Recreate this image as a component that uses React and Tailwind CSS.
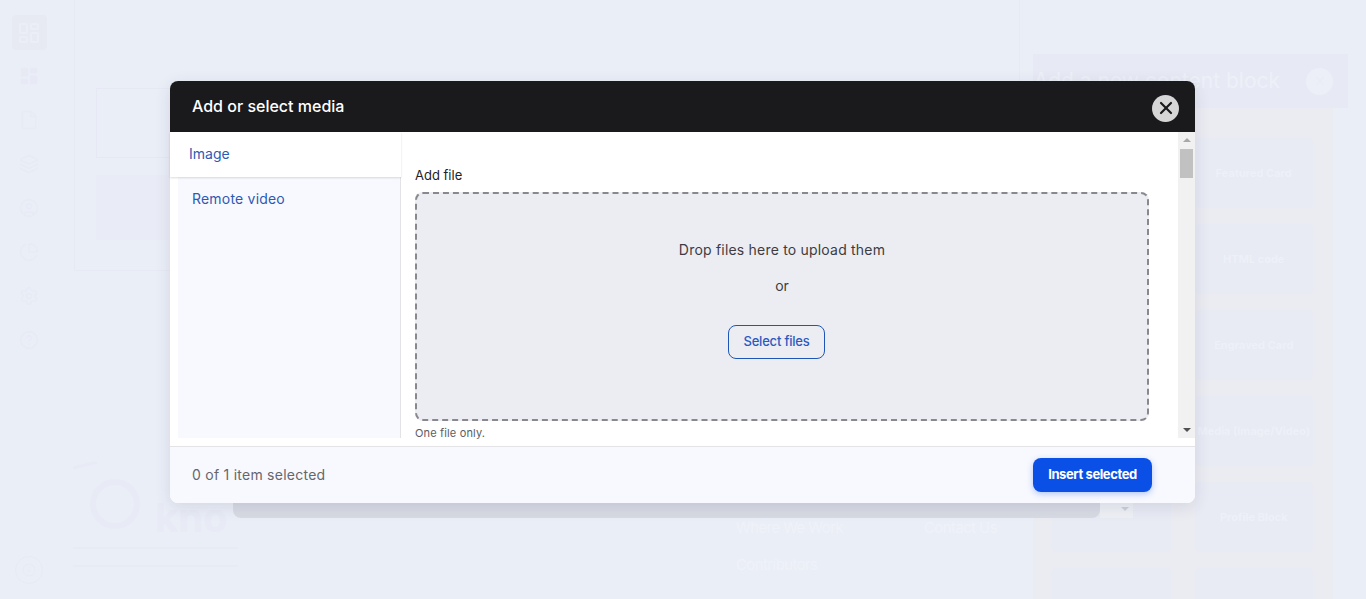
import { LayoutDashboard, File, Layers, CircleUser, PieChart, Settings, CircleHelp, X, Info } from 'lucide-react';

const sideIcons = [File, Layers, CircleUser, PieChart, Settings, CircleHelp];
const blockLabels = ['', 'Featured Card', '', 'HTML code', '', 'Engraved Card', '', 'Media (Image/Video)', '', 'Profile Block', '', ''];

function PageBehind() {
	return (
		<div className="flex h-full w-full">
			<aside className="flex w-[58px] shrink-0 flex-col items-center pt-[15px]">
				<div className="flex size-[35px] items-center justify-center rounded bg-[#e7eaf3]">
					<LayoutDashboard className="size-[24px] text-[#ebeef7]" strokeWidth={2} />
				</div>
				<div className="mt-[16px] flex flex-col items-center gap-[24px]">
					<LayoutDashboard className="size-[20px] text-[#e7eaf4]" fill="#e7eaf4" />
					{sideIcons.map((Icon, i) => (
						<Icon key={i} className="size-[20px] text-[#e8ebf5]" />
					))}
				</div>
				<div className="mt-auto mb-[15px] flex size-[28px] items-center justify-center rounded-full border border-[#e8ebf5]">
					<Info className="size-[14px] text-[#e8ebf5]" />
				</div>
			</aside>

			<main className="flex w-[962px] shrink-0 flex-col">
				<section className="ml-[16px] h-[271px] border-r border-b border-l border-[#e7eaf4] pt-[88px] pl-[21px]">
					<div className="h-[70px] border border-[#e6e9f3]" />
					<div className="mt-[17px] h-[65px] bg-[#e9ecf6]" />
				</section>
				<div className="flex flex-1 items-start">
					<div className="mt-[191px] ml-[15px] flex w-[165px] flex-col">
						<div className="flex items-end">
							<svg width="82" height="70" viewBox="0 0 82 70" fill="none" className="text-[#e8ebf5]">
								<path d="M0 6 L24 0" stroke="currentColor" strokeWidth="3" />
								<circle cx="42" cy="42" r="22" stroke="currentColor" strokeWidth="6" />
							</svg>
							<span className="text-[40px] leading-[28px] font-bold text-[#e8ebf5]">kno</span>
						</div>
						<div className="mt-[15px] h-[2px] w-[165px] bg-[#e8ebf5]" />
						<div className="mt-[16px] h-[2px] w-[165px] bg-[#e8ebf5]" />
					</div>
					<div className="mt-[248px] ml-[498px] flex w-[188px] flex-col gap-[19px] text-[15px] leading-[18px] tracking-[-0.6px] text-[#f0f2f9]">
						<span>Where We Work</span>
						<span>Contributors</span>
					</div>
					<span className="mt-[248px] text-[15px] leading-[18px] tracking-[-0.6px] text-[#f0f2f9]">Contact Us</span>
				</div>
			</main>

			<aside className="flex w-[346px] shrink-0 flex-col pt-[54px] pl-[13px]">
				<div className="flex h-[54px] w-[315px] shrink-0 items-center justify-end bg-[#e7eaf4] pr-[15px]">
					<span className="text-[21px] whitespace-nowrap text-[#edf0f8]">Add a new content block</span>
					<span className="ml-[26px] flex size-[27px] shrink-0 items-center justify-center rounded-full bg-[#eceff7]">
						<X className="size-[14px] text-[#e9ecf5]" />
					</span>
				</div>
				<div className="grid w-[300px] flex-1 grid-cols-2 content-start gap-x-[24px] gap-y-[16px] overflow-hidden bg-[#ebecf2] pt-[30px] pr-[20px] pl-[19px]">
					{blockLabels.map((label, i) => (
						<div key={i} className="flex h-[70px] items-center justify-center rounded bg-[#e8ebf4] text-[11px] font-bold whitespace-nowrap text-[#edf0f8]">
							{label}
						</div>
					))}
				</div>
			</aside>
		</div>
	);
}

function MediaModal() {
	return (
		<div className="absolute top-[81px] left-[170px] flex h-[422px] w-[1025px] flex-col rounded-lg bg-white shadow-[0_4px_16px_rgba(40,50,80,0.12)]">
			<header className="flex h-[51px] shrink-0 items-center justify-between rounded-t-lg bg-[#1a1a1c] pr-[16px] pb-[2px] pl-[22px]">
				<h2 className="text-[16px] font-medium text-white">Add or select media</h2>
				<button className="mt-[5px] flex size-[27px] items-center justify-center rounded-full bg-[#d6d6d6] text-[#1a1a1c]">
					<X className="size-[20px]" strokeWidth={2.6} />
				</button>
			</header>

			<div className="flex h-[306px] shrink-0">
				<nav className="flex w-[231px] shrink-0 flex-col">
					<div className="z-10 flex h-[45px] shrink-0 items-center bg-white pb-[2px] pl-[19px] text-[14px] text-[#2d5ab5] shadow-[0_1px_2px_rgba(0,0,0,0.14)]">
						Image
					</div>
					<div className="flex-1 border-r border-[#e3e3e6] pl-[8px]">
						<div className="h-full bg-[#f8f9fe] pt-[12px] pl-[14px] text-[14px] leading-[20px] tracking-[0.2px] text-[#2d5ab5]">
							Remote video
						</div>
					</div>
				</nav>

				<div className="flex-1 pt-[35px] pl-[14px]">
					<p className="text-[13px] leading-[16px] text-[#222226]">Add file</p>
					<div className="mt-[9px] flex h-[229px] w-[734px] flex-col items-center rounded-lg border-2 border-dashed border-[#88888e] bg-[#ecedf3]">
						<p className="mt-[46px] text-[14px] leading-[20px] tracking-[0.2px] text-[#3c3c42]">Drop files here to upload them</p>
						<p className="mt-[16px] text-[14px] leading-[20px] text-[#3c3c42]">or</p>
						<button className="mt-[29px] mr-[11px] h-[34px] w-[97px] rounded-lg border border-[#1f56b5] text-[13px] font-medium tracking-[-0.2px] text-[#2a5abf]">
							Select files
						</button>
					</div>
					<p className="mt-[5px] text-[11px] leading-[14px] tracking-[0.15px] text-[#5c5c62]">One file only.</p>
				</div>

				<div className="flex w-[17px] shrink-0 flex-col items-center bg-[#f1f1f1]">
					<span className="mt-[6px] h-0 w-0 border-x-[4px] border-b-[4px] border-x-transparent border-b-[#a8a8a8]" />
					<span className="mt-[7px] h-[29px] w-[13px] bg-[#c1c1c1]" />
					<span className="mt-auto mb-[6px] h-0 w-0 border-x-[4px] border-t-[4px] border-x-transparent border-t-[#505050]" />
				</div>
			</div>

			<footer className="mt-[8px] flex flex-1 items-center justify-between rounded-b-lg border-t border-[#e3e3e6] bg-[#f8f9fe] pr-[43px] pl-[22px]">
				<span className="pb-[2px] text-[14px] tracking-[0.25px] text-[#66666c]">0 of 1 item selected</span>
				<button className="h-[34px] w-[119px] rounded-lg bg-[#0a50e6] text-[13px] font-bold tracking-[-0.4px] text-white shadow-[0_2px_6px_rgba(10,80,230,0.3)]">
					Insert selected
				</button>
			</footer>
		</div>
	);
}

export default function App() {
	return (
		<div className="relative h-[599px] w-[1366px] overflow-hidden bg-[#eaeef7] [font-family:Inter,sans-serif]">
			<PageBehind />
			{/* strip of the sticky bar that peeks out under the modal */}
			<div className="absolute top-[440px] left-[233px] flex h-[78px] w-[900px]">
				<div className="flex-1 rounded-b-lg bg-[#d8dbe4]" />
				<div className="flex w-[33px] items-end justify-center bg-[#eef0f5] pb-[7px] pl-[17px]">
					<span className="h-0 w-0 border-x-[4px] border-t-[4px] border-x-transparent border-t-[#cdd0da]" />
				</div>
			</div>
			<MediaModal />
		</div>
	);
}
